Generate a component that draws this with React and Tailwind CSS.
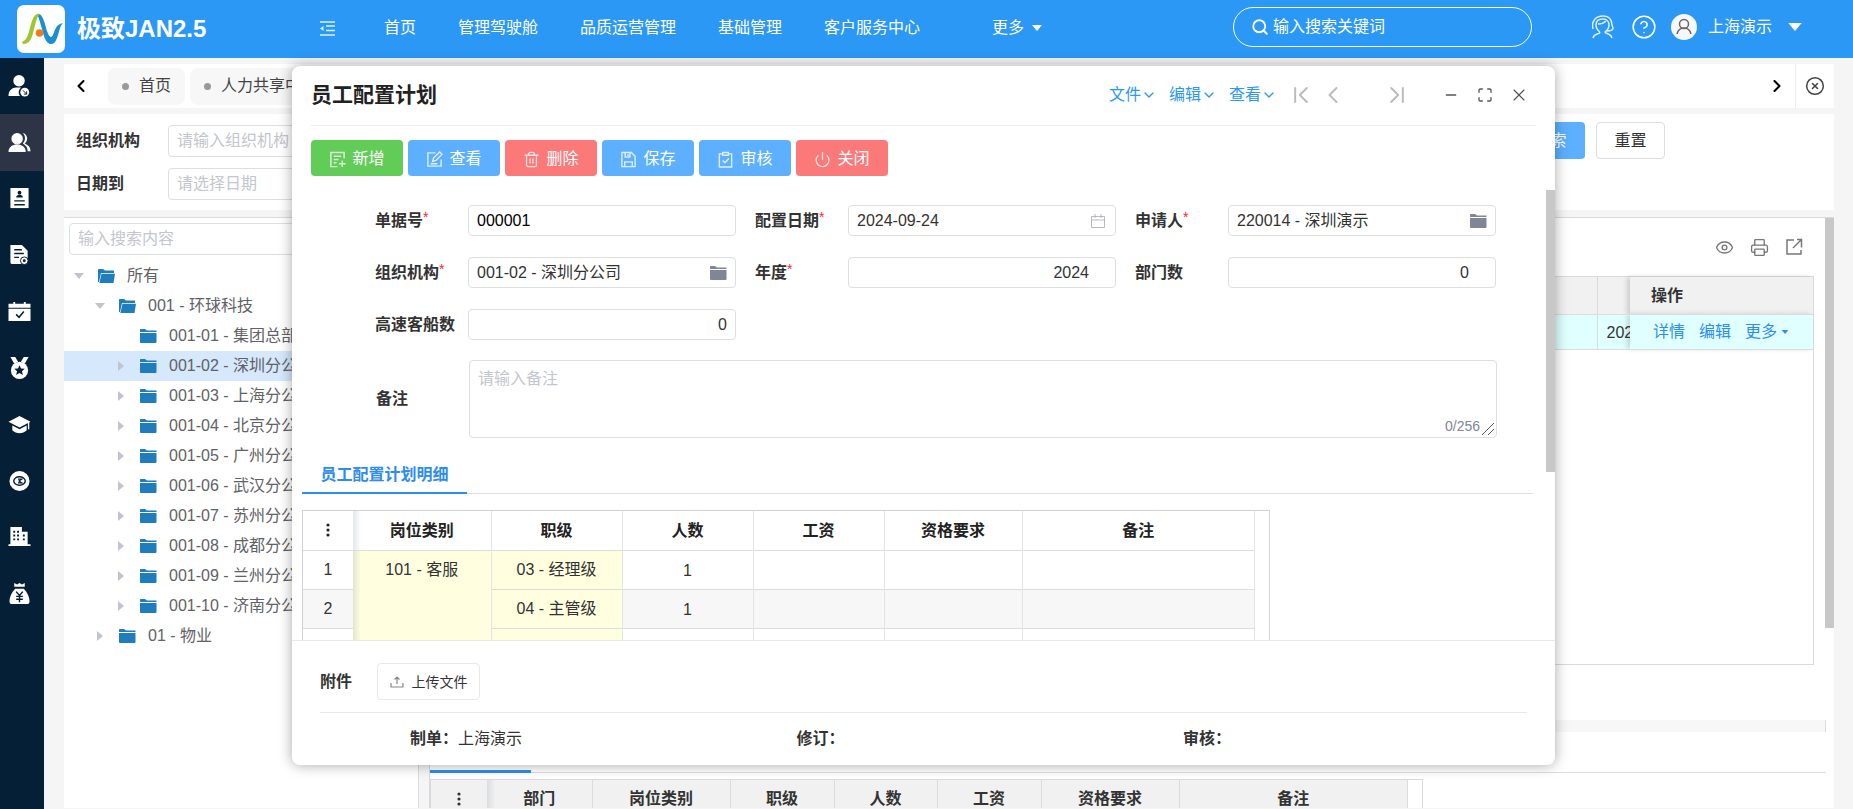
import React from 'react';
import { ChevronDown, ChevronLeft, ChevronRight, ChevronFirst, ChevronLast, Minus, Maximize, X, Search, Power, Trash2, CircleX, Eye, Printer, CircleHelp } from 'lucide-react';

const navItems = ['首页', '管理驾驶舱', '品质运营管理', '基础管理', '客户服务中心'];

const treeItems = [
  { label: '所有', level: 0, open: true },
  { label: '001 - 环球科技', level: 1, open: true },
  { label: '001-01 - 集团总部', level: 2, leaf: true },
  { label: '001-02 - 深圳分公司', level: 2, selected: true },
  { label: '001-03 - 上海分公司', level: 2 },
  { label: '001-04 - 北京分公司', level: 2 },
  { label: '001-05 - 广州分公司', level: 2 },
  { label: '001-06 - 武汉分公司', level: 2 },
  { label: '001-07 - 苏州分公司', level: 2 },
  { label: '001-08 - 成都分公司', level: 2 },
  { label: '001-09 - 兰州分公司', level: 2 },
  { label: '001-10 - 济南分公司', level: 2 },
  { label: '01 - 物业', level: 1 },
];

const treeIndent = ['pl-[9px]', 'pl-[30px]', 'pl-[51px]'];

const AddIcon = ({ className }) => (
  <svg className={className} viewBox="0 0 18 18" fill="none" stroke="currentColor" strokeWidth="1.5"><path d="M16 8V1.500H2v15h7M5 5.500h8M5 9h5M5 12.500h3M14 10v7M10.500 13.500h7" /></svg>
);
const EditIcon = ({ className }) => (
  <svg className={className} viewBox="0 0 18 18" fill="none" stroke="currentColor" strokeWidth="1.500"><path d="M10 2H2v14h14V9M7 11l1-3.500L14.500 1 17 3.500 10.500 10zM5 13.500h7" /></svg>
);
const SaveIcon = ({ className }) => (
  <svg className={className} viewBox="0 0 18 18" fill="none" stroke="currentColor" strokeWidth="1.500"><path d="M2 1.500h10l4 4v11H2zM5.500 2v4.500h5V2M5 16v-4.500h8V16M8.500 3.500v2" /></svg>
);
const CheckIcon = ({ className }) => (
  <svg className={className} viewBox="0 0 18 18" fill="none" stroke="currentColor" strokeWidth="1.500"><path d="M5.500 3H2.500v14h13V3h-3M6 1.500h6v3H6zM6 10l2.500 2.500L12.500 8" /></svg>
);

const toolButtons = [
  { label: '新增', icon: AddIcon, color: 'bg-[#61cd57]' },
  { label: '查看', icon: EditIcon, color: 'bg-[#5cb0ff]' },
  { label: '删除', icon: Trash2, color: 'bg-[#fb7979]' },
  { label: '保存', icon: SaveIcon, color: 'bg-[#5cb0ff]' },
  { label: '审核', icon: CheckIcon, color: 'bg-[#5cb0ff]' },
  { label: '关闭', icon: Power, color: 'bg-[#fb7979]' },
];

const Caret = ({ className }) => (
  <svg className={className} viewBox="0 0 10 6" fill="currentColor"><path d="M0 0h10L5 6z" /></svg>
);

const Folder = ({ open, className }) => (
  <svg className={className} viewBox="0 0 17 14" fill="currentColor">
    {open ? (
      <>
        <path d="M0 .8Q0 0 .8 0H5l2 1.500h9V4H3L1 13H0z" />
        <path d="M3.500 4.800H17L15.500 14H1.400z" />
      </>
    ) : (
      <>
        <path d="M0 .8Q0 0 .8 0H5l2 1.500h9.500V3H0z" />
        <path d="M0 4h16.500v9q0 1-1 1H1q-1 0-1-1z" />
      </>
    )}
  </svg>
);

const Logo = () => (
  <svg className="w-12 h-12" viewBox="0 0 48 48">
    <rect width="48" height="48" rx="7" fill="#fff" />
    <path d="M20 9c4-1 6 4 8 10 2 8 4 13 6 13 3 0 3-11 9-13l3-1c-3 3-3 6-5 12-2 7-4 9-7 9-5 0-7-7-9-15-2-7-3-11-5-15z" fill="#1b8fd2" />
    <path d="M5 37c5-2 6-7 8-14 2-8 4-14 8-14h2c-3 2-4 8-6 15-2 9-4 15-11 15z" fill="#9fc62c" />
    <circle cx="22.500" cy="28" r="3.800" fill="#f07c1e" />
  </svg>
);

const sideIcons = [
  <><circle cx="11" cy="6" r="6" /><path d="M0 22c0-6 4-9 8-9h5c-3 3-3 6-1 9z" /><circle cx="17" cy="18" r="4.600" /><path d="M15 16l4 4m0-3v3h-3" stroke="#051f37" fill="none" /></>,
  <><circle cx="9" cy="7" r="6" /><path d="M0 21c0-5 3-7 7-8h4c4 1 7 3 7 8z" /><path d="M15 1c5 1 6 8 2 11 4 2 6 4 6 8h-3c0-4-2-6-5-8 3-3 3-8 0-11z" /></>,
  <><path d="M2 0h19v21H2z" /><g stroke="#051f37" strokeWidth="1.400"><path d="M6 13.500h11M6 17.500h11" /></g><circle cx="11.500" cy="5" r="2" fill="#051f37" /><path d="M8 10c0-4 7-4 7 0z" fill="#051f37" /></>,
  <><path d="M2 1h12l6 6v8h-6v6H4q-2 0-2-2z" /><path d="M6 6h8M6 10h10M6 14h5" stroke="#051f37" strokeWidth="1.500" /><circle cx="16.500" cy="17.500" r="4" stroke="#051f37" /><circle cx="16.500" cy="17.500" r="1.500" fill="#051f37" /></>,
  <><path d="M0 3h5V1h2v2h9V1h2v2h5v4H0zM0 8h23v13H0z" /><path d="M8 14l3 3 5-6" stroke="#051f37" strokeWidth="1.600" fill="none" /></>,
  <><path d="M2 0h5l3 5-4 2zM21 0h-5l-3 5 4 2z" /><circle cx="11.500" cy="14" r="9" /><path d="M11.500 8.500l1.600 3.500 3.900.4-2.900 2.600.9 3.800-3.500-2-3.500 2 .9-3.800L6 12.400l3.900-.4z" fill="#051f37" /></>,
  <><path d="M11.500 2L23 8l-11.500 6L0 8z" /><path d="M4 12l7.500 4 7.500-4v5c-4 4-11 4-15 0z" /><path d="M21 8v8" stroke="#fff" strokeWidth="1.400" /></>,
  <><circle cx="11.500" cy="11.500" r="10.500" /><ellipse cx="11.500" cy="11.500" rx="6" ry="4.500" stroke="#051f37" strokeWidth="1.500" /><path d="M10 9.500h4l-3 2 3 2h-4" stroke="#051f37" strokeWidth="1.200" fill="none" /></>,
  <><path d="M2 1h12v5h6v13h3v2H0v-2h2z" /><path d="M5 6h2m2 0h2M5 10h2m2 0h2m4 0h2M5 14h2m2 0h2m4 0h2" stroke="#051f37" strokeWidth="2" /></>,
  <><path d="M6 0l3 1.500L11.500 0 14 1.500 17 0v4H6zM7 6h9c4 4 6 9 6 13q0 3-3 3H4q-3 0-3-3c0-4 2-9 6-13z" /><path d="M8 9l3.500 4L15 9M11.500 13v7M8 14h7M8 17h7" stroke="#051f37" strokeWidth="1.500" fill="none" /></>,
];

const Field = ({ id, label, required, value, align, icon }) => (
  <div className="flex items-center">
    <label htmlFor={id} className="w-[93px] shrink-0 font-semibold whitespace-nowrap">
      {label}{required && <span className="text-[#f22] text-sm font-normal align-top leading-4">*</span>}
    </label>
    <div className="flex-1 min-w-0 h-[31px] flex items-center border border-[#dcdee2] rounded px-2 bg-white">
      <input id={id} defaultValue={value} className={`w-full min-w-0 outline-none ${align || ''}`} />
      {icon}
    </div>
  </div>
);

const Header = () => (
  <header className="h-[58px] shrink-0 bg-[#2b98f6] text-white flex items-center">
    <div className="w-[320px] shrink-0 flex items-center gap-3 pl-[17px]">
      <Logo />
      <span className="text-2xl font-semibold">极致JAN2.5</span>
    </div>
    <button className="w-16 shrink-0 pb-0.5" aria-label="收起菜单">
      <svg className="w-[15px] h-[15px]" viewBox="0 0 15 15" stroke="currentColor" strokeWidth="1.500" opacity=".85"><path d="M0 1h15M6 5h9M6 9.500h9M0 14h15" /><path d="M3.500 5v5L0 7.500z" fill="currentColor" stroke="none" /></svg>
    </button>
    <nav className="flex gap-[42px] pb-0.5">
      {navItems.map((n) => <a key={n} href="#" className="whitespace-nowrap">{n}</a>)}
      <a href="#" className="flex items-center gap-2 ml-[30px] whitespace-nowrap">更多 <Caret className="w-2.5 h-1.5" /></a>
    </nav>
    <div className="ml-auto w-[299px] h-10 mb-1 border border-white rounded-full flex items-center gap-1 pl-[17px] pr-4">
      <Search className="w-[18px] h-[18px] shrink-0" strokeWidth={2.5} />
      <input aria-label="搜索" placeholder="输入搜索关键词" className="w-full bg-transparent outline-none placeholder:text-white" />
    </div>
    <div className="flex items-center ml-[60px] mb-1 mr-[51px]">
      <svg className="w-[22px] h-6" viewBox="0 0 22 24" fill="none" stroke="currentColor" strokeWidth="1.500" opacity=".85">
        <path d="M1 14C-1 6 4 1 11 1c6 0 9 4 9 9" />
        <path d="M8 17c-3-2-4-4-4-7 0-4 3-6 7-6s6 3 6 6-1 5-4 7c0 2 6 1 7 6M8 17c0 3-6 1-7 6M6 9c4 0 6-1 8-3M20 10l1 3c0 2-3 3-6 3" />
      </svg>
      <CircleHelp className="w-[26px] h-[26px] ml-[17px]" strokeWidth={1.4} />
      <svg className="w-[26px] h-[26px] ml-[14px]" viewBox="0 0 26 26" fill="none"><circle cx="13" cy="13" r="13" fill="#f7f7f7" /><circle cx="13" cy="10" r="4.500" stroke="#666" strokeWidth="1.500" /><path d="M6 20c1-4 3-6 7-6s6 2 7 6" stroke="#666" strokeWidth="1.500" /></svg>
      <span className="ml-[11px]">上海演示</span>
      <Caret className="w-3.5 h-2 ml-4" />
    </div>
  </header>
);

const Sidebar = () => (
  <aside className="w-11 shrink-0 bg-[#051f37]">
    <div className="flex flex-col h-[564px]">
      {sideIcons.map((icon, i) => (
        <button key={i} aria-label={`模块${i + 1}`} className={`flex-1 flex items-center justify-center pr-1.5 ${i === 1 ? 'bg-[#2c3445]' : ''}`}>
          <svg className="w-[23px] h-[22px] text-white" viewBox="0 0 23 23" fill="currentColor">{icon}</svg>
        </button>
      ))}
    </div>
  </aside>
);

const Tree = () => (
  <section className="w-[355px] shrink-0 bg-white border-r border-[#d8dade]">
    <div className="pt-[5px] pl-[5px] pr-2">
      <input aria-label="搜索内容" placeholder="输入搜索内容" className="w-full h-8 border border-[#dcdee2] rounded px-2 outline-none placeholder:text-[#c3c6cc]" />
    </div>
    <ul className="pt-1.5 text-[#606266]">
      {treeItems.map((t) => (
        <li key={t.label} className={`h-[30px] flex items-center ${treeIndent[t.level]} ${t.selected ? 'bg-[#d5e8fc]' : ''}`}>
          <span className="w-[25px] shrink-0 pl-px text-[#c0c4cc]">
            {!t.leaf && <Caret className={t.open ? 'w-2.5 h-1.5' : 'w-2.5 h-1.5 -rotate-90'} />}
          </span>
          <Folder open={t.open} className="w-[17px] h-3.5 shrink-0 text-[#1f7dbd]" />
          <span className="ml-3 whitespace-nowrap">{t.label}</span>
        </li>
      ))}
    </ul>
  </section>
);

const Dots = () => (
  <svg className="w-1 h-3.5 mx-auto" viewBox="0 0 4 14" fill="currentColor"><circle cx="2" cy="2" r="1.600" /><circle cx="2" cy="7" r="1.600" /><circle cx="2" cy="12" r="1.600" /></svg>
);

const Workspace = () => (
  <section className="flex-1 min-w-0 bg-white border-l border-[#d8dade] relative">
    <div className="absolute right-0 top-0 w-[9px] h-[410px] bg-[#c8c8c8]"></div>
    <div className="flex justify-end items-center gap-4 pr-[31px] h-[58px] text-[#777]">
      <button aria-label="显示"><Eye className="w-[19px] h-[19px]" strokeWidth={1.7} /></button>
      <button aria-label="打印"><Printer className="w-[19px] h-[19px]" strokeWidth={1.7} /></button>
      <button aria-label="导出">
        <svg className="w-[18px] h-[18px]" viewBox="0 0 18 18" fill="none" stroke="currentColor" strokeWidth="1.500"><path d="M9 2H2v14h14v-4M8 10l8-8M12 1.500h4.500v8" /></svg>
      </button>
    </div>
    <div className="mr-5 h-[389px] border border-[#d8dade]">
      <table className="w-full table-fixed border-collapse text-left">
        <thead>
          <tr className="h-[37px] bg-[#f1f1f1] border-b border-[#dcdcdc]">
            <th></th>
            <th className="w-[33px] border-l border-[#dcdcdc]"></th>
            <th className="w-[183px] pl-[21px] pt-0.5 font-semibold text-[#333] shadow-[-3px_0_5px_rgba(0,0,0,0.15)]">操作</th>
          </tr>
        </thead>
        <tbody>
          <tr className="h-[35px] bg-[#e0ffff] border-b border-[#dcdcdc]">
            <td></td>
            <td className="border-l border-[#dcdcdc] pl-[9px] pt-0.5 overflow-hidden whitespace-nowrap text-[#333]">2024</td>
            <td className="pl-[23px] bg-[#e0ffff] text-[#2d8cf0] shadow-[-3px_0_5px_rgba(0,0,0,0.15)]">
              <div className="flex items-center gap-3.5">
                <a href="#">详情</a>
                <a href="#">编辑</a>
                <a href="#" className="flex items-center gap-1">更多<Caret className="w-2 h-1" /></a>
              </div>
            </td>
          </tr>
        </tbody>
      </table>
    </div>
    <div className="mt-[55px] h-3 mr-2 bg-[#f7f7f7] border-r border-[#dcdcdc]"></div>
    <div className="mt-[38px] mr-2 border-b border-[#dcdee2] h-[3px]"><div className="w-[101px] h-[3px] bg-[#2d8cf0]"></div></div>
    <div className="mt-[6px] w-[993px] h-[38px] border border-b-0 border-[#d8dade] pr-3.5">
      <table className="w-full table-fixed border-collapse text-[#333]">
        <thead>
          <tr className="h-[38px] bg-[#f1f1f1]">
            <th className="w-[56px]"><Dots /></th>
            <th className="w-[105px] border-r border-[#dcdcdc] font-semibold bg-[linear-gradient(to_right,#dadcde,#f1f1f1_8px)]">部门</th>
            <th className="w-[138px] border-r border-[#dcdcdc] font-semibold">岗位类别</th>
            <th className="w-[104px] border-r border-[#dcdcdc] font-semibold">职级</th>
            <th className="w-[103px] border-r border-[#dcdcdc] font-semibold">人数</th>
            <th className="w-[104px] border-r border-[#dcdcdc] font-semibold">工资</th>
            <th className="w-[138px] border-r border-[#dcdcdc] font-semibold">资格要求</th>
            <th className="border-r border-[#dcdcdc] font-semibold">备注</th>
          </tr>
        </thead>
      </table>
    </div>
  </section>
);

const DetailTable = () => (
  <div className="w-[968px] pr-3.5 border border-b-0 border-[#cfd1d6]">
    <table className="w-full table-fixed border-collapse text-center text-[#333]">
      <thead>
        <tr className="h-[39px] border-b border-[#dcdcdc] text-[#222]">
          <th className="w-[50px]"><Dots /></th>
          <th className="w-[138px] border-r border-[#e4e4e4] pt-0.5 font-semibold bg-[linear-gradient(to_right,#e4e6ea,#ffffff_8px)]">岗位类别</th>
          <th className="w-[131px] border-r border-[#e4e4e4] pt-0.5 font-semibold">职级</th>
          <th className="w-[131px] border-r border-[#e4e4e4] pt-0.5 font-semibold">人数</th>
          <th className="w-[131px] border-r border-[#e4e4e4] pt-0.5 font-semibold">工资</th>
          <th className="w-[138px] border-r border-[#e4e4e4] pt-0.5 font-semibold">资格要求</th>
          <th className="border-r border-[#e4e4e4] pt-0.5 font-semibold">备注</th>
        </tr>
      </thead>
      <tbody>
        {['03 - 经理级', '04 - 主管级', '05 - 专员级'].map((grade, i) => (
          <tr key={grade} className={`h-[39px] border-b border-[#dcdcdc] ${i === 1 ? 'bg-[#f7f7f7]' : ''} ${i === 2 ? 'align-bottom' : ''}`}>
            <td>{i + 1}</td>
            {i === 0 && <td rowSpan={3} className="border-r border-[#e4e4e4] align-top pt-[7px] bg-[linear-gradient(to_right,#e3e6cc,#ffffe0_8px)]">101 - 客服</td>}
            <td className="bg-[#ffffe0] border-r border-[#e4e4e4]">{grade}</td>
            <td className="border-r border-[#e4e4e4] pt-0.5">1</td>
            <td className="border-r border-[#e4e4e4]"></td>
            <td className="border-r border-[#e4e4e4]"></td>
            <td className="border-r border-[#e4e4e4]"></td>
          </tr>
        ))}
      </tbody>
    </table>
  </div>
);

const folderIcon = <Folder className="w-[17px] h-3.5 shrink-0 text-[#808695]" />;

const PlanDialog = () => (
  <div role="dialog" aria-label="员工配置计划" className="absolute left-[292px] right-[298px] top-[66px] bottom-11 bg-white rounded-lg shadow-[0_0_14px_rgba(0,0,0,0.35)] flex flex-col overflow-hidden">
    <div className="mx-[19px] h-[60px] pb-0.5 shrink-0 border-b border-[#ececec] flex items-center justify-between">
      <h2 className="text-[21px] font-semibold text-[#222]">员工配置计划</h2>
      <div className="flex items-center text-[#2b98f6] pr-[7px]">
        <div className="flex gap-3">
          {['文件', '编辑', '查看'].map((m) => (
            <button key={m} className="flex items-center">{m}<ChevronDown className="w-4 h-4" strokeWidth={2} /></button>
          ))}
        </div>
        <div className="flex items-center text-[#bbb] ml-2.5">
          <button aria-label="第一条"><ChevronFirst className="w-7 h-7" strokeWidth={1.7} /></button>
          <button aria-label="上一条" className="ml-1"><ChevronLeft className="w-7 h-7" strokeWidth={1.7} /></button>
          <button aria-label="最后一条" className="ml-9"><ChevronLast className="w-7 h-7" strokeWidth={1.7} /></button>
        </div>
        <div className="flex items-center gap-4 text-[#555] ml-[30px]">
          <button aria-label="最小化" className="w-5 flex justify-center"><Minus className="w-4 h-4" /></button>
          <button aria-label="全屏"><Maximize className="w-4 h-4" strokeWidth={2} /></button>
          <button aria-label="关闭窗口"><X className="w-5 h-5" strokeWidth={1.4} /></button>
        </div>
      </div>
    </div>
    <div className="flex gap-[5px] px-[19px] pt-3.5 shrink-0">
      {toolButtons.map(({ label, icon: Icon, color }) => (
        <button key={label} className={`w-[92px] h-9 pt-0.5 rounded text-white flex items-center justify-center gap-1.5 ${color}`}>
          <Icon className="w-[17px] h-[17px] opacity-80" strokeWidth={1.8} />{label}
        </button>
      ))}
    </div>
    <div className="mt-3.5 flex-1 min-h-0 overflow-hidden relative text-[#333]">
      <div className="absolute right-0 top-0 w-[9px] h-[282px] bg-[#c8c8c8]"></div>
      <div className="grid grid-cols-3 gap-x-[19px] gap-y-[21px] pl-[83px] pr-[59px] pt-[15px]">
        <Field id="no" label="单据号" required value="000001" align="text-black" />
        <Field id="date" label="配置日期" required value="2024-09-24" icon={
          <svg className="w-3.5 h-3.5 mr-0.5 shrink-0 text-[#b5b9c4]" viewBox="0 0 14 14" fill="none" stroke="currentColor"><path d="M.5 2.500h13v11H.5zM.5 6h13M4 0v4M10 0v4" /></svg>
        } />
        <Field id="person" label="申请人" required value="220014 - 深圳演示" icon={folderIcon} />
        <Field id="org" label="组织机构" required value="001-02 - 深圳分公司" icon={folderIcon} />
        <Field id="year" label="年度" required value="2024" align="text-right pr-[18px]" />
        <Field id="dept" label="部门数" value="0" align="text-right pr-[18px]" />
        <Field id="ship" label="高速客船数" value="0" align="text-right" />
      </div>
      <div className="flex items-center pl-[84px] pr-[58px] mt-5">
        <label htmlFor="remark" className="w-[93px] shrink-0 font-semibold">备注</label>
        <div className="flex-1 relative">
          <textarea id="remark" placeholder="请输入备注" className="block w-full h-[78px] resize-none border border-[#dcdee2] rounded px-2 py-1.5 outline-none placeholder:text-[#c3c6cc]"></textarea>
          <span className="absolute right-[17px] bottom-0.5 text-sm text-[#808695]">0/256</span>
          <svg className="absolute right-0.5 bottom-0.5 w-3.5 h-3.5" viewBox="0 0 14 14" stroke="#555"><path d="M1 13L13 1M7 13l6-6" /></svg>
        </div>
      </div>
      <div className="mt-4 ml-2.5 mr-[22px] border-b border-[#dcdee2] h-10">
        <button className="w-[165px] h-10 pt-1 border-b-2 border-[#2d8cf0] text-[#2d8cf0] font-semibold">员工配置计划明细</button>
      </div>
      <div className="mt-4 ml-2.5"><DetailTable /></div>
    </div>
    <div className="shrink-0 h-[125px] border-t border-[#e8e8e8] text-[#333]">
      <div className="mx-7 h-[72px] pt-[22px] border-b border-[#e8e8e8]">
        <div className="flex items-center gap-[25px]">
          <span className="font-semibold">附件</span>
          <button className="w-[103px] h-[37px] border border-[#e8e8e8] rounded text-sm flex items-center justify-center gap-2">
            <svg className="w-3.5 h-3 text-[#888]" viewBox="0 0 14 12" fill="none" stroke="currentColor" strokeWidth="1.200"><path d="M1 7v4h12V7M7 8V1M4.500 3.500L7 1l2.500 2.500" /></svg>
            上传文件
          </button>
        </div>
      </div>
      <div className="grid grid-cols-[1fr_1fr_372px] pl-[118px] h-[52px] items-center">
        <div><span className="font-semibold">制单：</span>上海演示</div>
        <div className="font-semibold">修订：</div>
        <div className="font-semibold">审核：</div>
      </div>
    </div>
  </div>
);

const App = () => {
  return (
    <div className="h-screen overflow-hidden relative flex flex-col bg-[#f5f5f5] text-base font-['Liberation_Sans','Noto_Sans_CJK_SC',sans-serif]">
      <Header />
      <div className="flex-1 min-h-0 flex">
        <Sidebar />
        <main className="flex-1 min-w-0 flex flex-col pl-5 pr-[19px] pt-1.5 pb-px">
          <div className="h-11 shrink-0 bg-white flex items-center text-[#444]">
            <button aria-label="向左" className="w-11 flex justify-center pr-2.5"><ChevronLeft className="w-5 h-5 text-black" strokeWidth={2.5} /></button>
            <div className="flex gap-[5px]">
              <a href="#" className="h-[37px] flex items-center gap-2.5 rounded-lg bg-[#f7f7f7] px-3.5"><i className="w-[7px] h-[7px] rounded-full bg-[#999]"></i>首页</a>
              <a href="#" className="h-[37px] flex items-center gap-2.5 rounded-lg bg-[#f7f7f7] px-3.5"><i className="w-[7px] h-[7px] rounded-full bg-[#999]"></i>人力共享中心</a>
            </div>
            <button aria-label="向右" className="ml-auto mr-2"><ChevronRight className="w-5 h-5 text-black" strokeWidth={2.5} /></button>
            <button aria-label="关闭标签" className="w-[39px] h-11 border-l border-[#eee] flex items-center justify-center"><CircleX className="w-5 h-5" strokeWidth={1.8} /></button>
          </div>
          <div className="h-24 shrink-0 mt-1.5 bg-white flex justify-between pl-3 pr-[169px] text-[#333]">
            <div className="pt-[11px] flex flex-col gap-[11px]">
              <div className="flex items-center">
                <label htmlFor="q-org" className="w-[92px] font-semibold">组织机构</label>
                <input id="q-org" placeholder="请输入组织机构" className="w-56 h-8 border border-[#dcdee2] rounded px-2 placeholder:text-[#c3c6cc]" />
              </div>
              <div className="flex items-center">
                <label htmlFor="q-date" className="w-[92px] font-semibold">日期到</label>
                <input id="q-date" placeholder="请选择日期" className="w-56 h-8 border border-[#dcdee2] rounded px-2 placeholder:text-[#c3c6cc]" />
              </div>
            </div>
            <div className="flex gap-[11px] pt-2">
              <button className="w-[69px] h-[37px] rounded bg-[#5cb0ff] text-white">搜索</button>
              <button className="w-[69px] h-[37px] rounded border border-[#dcdee2]">重置</button>
            </div>
          </div>
          <div className="flex-1 min-h-0 mt-[7px] flex gap-2.5 border-t border-[#d8dade] overflow-hidden">
            <Tree />
            <Workspace />
          </div>
        </main>
      </div>
      <PlanDialog />
    </div>
  );
};

export default App;
